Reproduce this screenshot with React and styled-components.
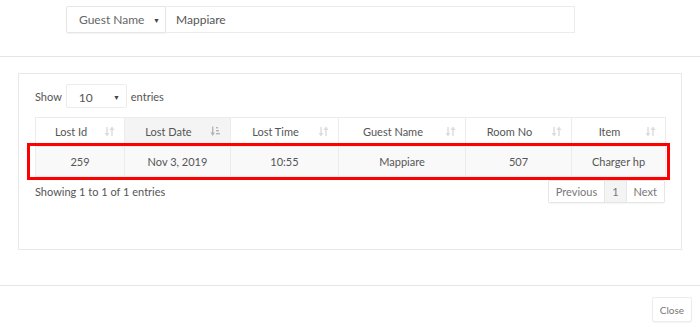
import React from "react";
import styled, { createGlobalStyle } from "styled-components";

const Global = createGlobalStyle`
  body {
    margin: 0;
    font-family: Lato, "Open Sans", sans-serif;
    color: #555;
    background: #fff;
  }
`;

const columns = [
  { key: "id", label: "Lost Id", width: 89 },
  { key: "date", label: "Lost Date", width: 106, sorted: true },
  { key: "time", label: "Lost Time", width: 108 },
  { key: "guest", label: "Guest Name", width: 127 },
  { key: "room", label: "Room No", width: 106 },
  { key: "item", label: "Item", width: 94 },
];

const rows = [
  { id: "259", date: "Nov 3, 2019", time: "10:55", guest: "Mappiare", room: "507", item: "Charger hp" },
];

const SortIcon = ({ active }) => (
  <SortSvg width="11" height="11" viewBox="0 0 11 11">
    {active ? (
      <g fill="#b5b5b5">
        <rect x="2" y="0.5" width="1.4" height="8" />
        <path d="M0.4 6.5 L2.7 10 L5 6.5 Z" />
        <rect x="6" y="1" width="2" height="1.4" />
        <rect x="6" y="4" width="3" height="1.4" />
        <rect x="6" y="7" width="4" height="1.4" />
      </g>
    ) : (
      <g fill="#dcdcdc">
        <rect x="2.3" y="1" width="1.4" height="7" />
        <path d="M0.5 7 L3 10.5 L5.5 7 Z" />
        <rect x="7.3" y="3" width="1.4" height="7" />
        <path d="M5.5 4 L8 0.5 L10.5 4 Z" />
      </g>
    )}
  </SortSvg>
);

const App = () => {
  return (
    <>
      <Global />
      <Modal>
        <SearchBar>
          <FilterSelect>
            <span>Guest Name</span>
            <Caret>▼</Caret>
          </FilterSelect>
          <SearchInput>Mappiare</SearchInput>
        </SearchBar>
        <Body>
          <Card>
            <LengthRow>
              Show
              <LengthSelect>
                <span>10</span>
                <Caret>▼</Caret>
              </LengthSelect>
              entries
            </LengthRow>
            <TableWrap>
              <Table>
                <thead>
                  <tr>
                    {columns.map((c) => (
                      <Th key={c.key} $sorted={c.sorted} style={{ width: c.width }}>
                        {c.label}
                        <SortIcon active={c.sorted} />
                      </Th>
                    ))}
                  </tr>
                </thead>
                <tbody>
                  {rows.map((r) => (
                    <tr key={r.id}>
                      {columns.map((c) => (
                        <Td key={c.key}>{r[c.key]}</Td>
                      ))}
                    </tr>
                  ))}
                </tbody>
              </Table>
              <Highlight />
            </TableWrap>
            <InfoRow>
              <Info>Showing 1 to 1 of 1 entries</Info>
              <Pager>
                <PageBtn>Previous</PageBtn>
                <PageBtn $current>1</PageBtn>
                <PageBtn>Next</PageBtn>
              </Pager>
            </InfoRow>
          </Card>
        </Body>
        <Footer>
          <CloseBtn>Close</CloseBtn>
        </Footer>
      </Modal>
    </>
  );
};

const Modal = styled.div`
  width: 700px;
  height: 327px;
  overflow: hidden;
`;

const SearchBar = styled.div`
  display: flex;
  height: 57px;
  box-sizing: border-box;
  padding: 6px 0 0 66px;
  border-bottom: 1px solid #e5e5e5;
`;

const FilterSelect = styled.div`
  display: flex;
  align-items: center;
  justify-content: space-between;
  box-sizing: border-box;
  width: 100px;
  height: 27px;
  padding: 0 5px 0 12px;
  border: 1px solid #e6e6e6;
  border-radius: 2px 0 0 2px;
  box-shadow: 0 1px 1px rgba(0, 0, 0, 0.05);
  font-size: 12px;
  color: #666;
`;

const Caret = styled.span`
  font-size: 7px;
  color: #444;
`;

const SearchInput = styled.div`
  display: flex;
  align-items: center;
  box-sizing: border-box;
  width: 409px;
  height: 27px;
  padding: 0 10px;
  border: 1px solid #ececec;
  border-left: none;
  font-size: 12px;
  color: #555;
`;

const Body = styled.div`
  height: 229px;
  box-sizing: border-box;
  padding: 16px 18px 0;
  border-bottom: 1px solid #e5e5e5;
`;

const Card = styled.div`
  box-sizing: border-box;
  height: 177px;
  padding: 10px 16px 0;
  border: 1px solid #e8e8e8;
`;

const LengthRow = styled.div`
  display: flex;
  align-items: center;
  gap: 4px;
  height: 24px;
  font-size: 11px;
  color: #555;
`;

const LengthSelect = styled.div`
  display: flex;
  align-items: center;
  justify-content: space-between;
  box-sizing: border-box;
  width: 61px;
  height: 24px;
  padding: 2px 6px 0 12px;
  border: 1px solid #ececec;
  border-radius: 2px;
  font-size: 12px;
  color: #555;
`;

const TableWrap = styled.div`
  position: relative;
  margin-top: 9px;
`;

const Table = styled.table`
  width: 630px;
  border-collapse: collapse;
  table-layout: fixed;
  font-size: 11px;
  color: #555;
`;

const Th = styled.th`
  position: relative;
  height: 28px;
  padding: 0 18px 0 0;
  box-sizing: border-box;
  border: 1px solid #ececec;
  border-bottom-width: 2px;
  font-weight: 400;
  text-align: center;
  background: ${(p) => (p.$sorted ? "#f4f4f4" : "#fff")};
`;

const SortSvg = styled.svg`
  position: absolute;
  right: 9px;
  top: 8px;
`;

const Td = styled.td`
  height: 29px;
  padding: 0;
  border: 1px solid #ececec;
  text-align: center;
  background: #f9f9f9;
`;

const Highlight = styled.div`
  position: absolute;
  left: -8px;
  top: 26px;
  width: 637px;
  height: 31px;
  border: 3px solid #ff0000;
  pointer-events: none;
`;

const InfoRow = styled.div`
  display: flex;
  justify-content: space-between;
  align-items: flex-start;
  width: 630px;
  margin-top: 3px;
`;

const Info = styled.div`
  padding-top: 5px;
  font-size: 11px;
  color: #555;
`;

const Pager = styled.div`
  display: flex;
  border: 1px solid #e6e6e6;
  border-radius: 2px;
  box-shadow: 0 1px 1px rgba(0, 0, 0, 0.04);
`;

const PageBtn = styled.div`
  display: flex;
  align-items: center;
  height: 21px;
  padding: 0 7px;
  font-size: 11px;
  color: #777;
  background: ${(p) => (p.$current ? "#f4f4f4" : "#fff")};
  & + & {
    border-left: 1px solid #e6e6e6;
  }
`;

const Footer = styled.div`
  display: flex;
  justify-content: flex-end;
  padding: 11px 8px 0 0;
`;

const CloseBtn = styled.div`
  display: flex;
  align-items: center;
  justify-content: center;
  box-sizing: border-box;
  width: 40px;
  height: 25px;
  border: 1px solid #ececec;
  border-radius: 2px;
  box-shadow: 0 1px 1px rgba(0, 0, 0, 0.04);
  font-size: 10px;
  color: #777;
`;

export default App;
